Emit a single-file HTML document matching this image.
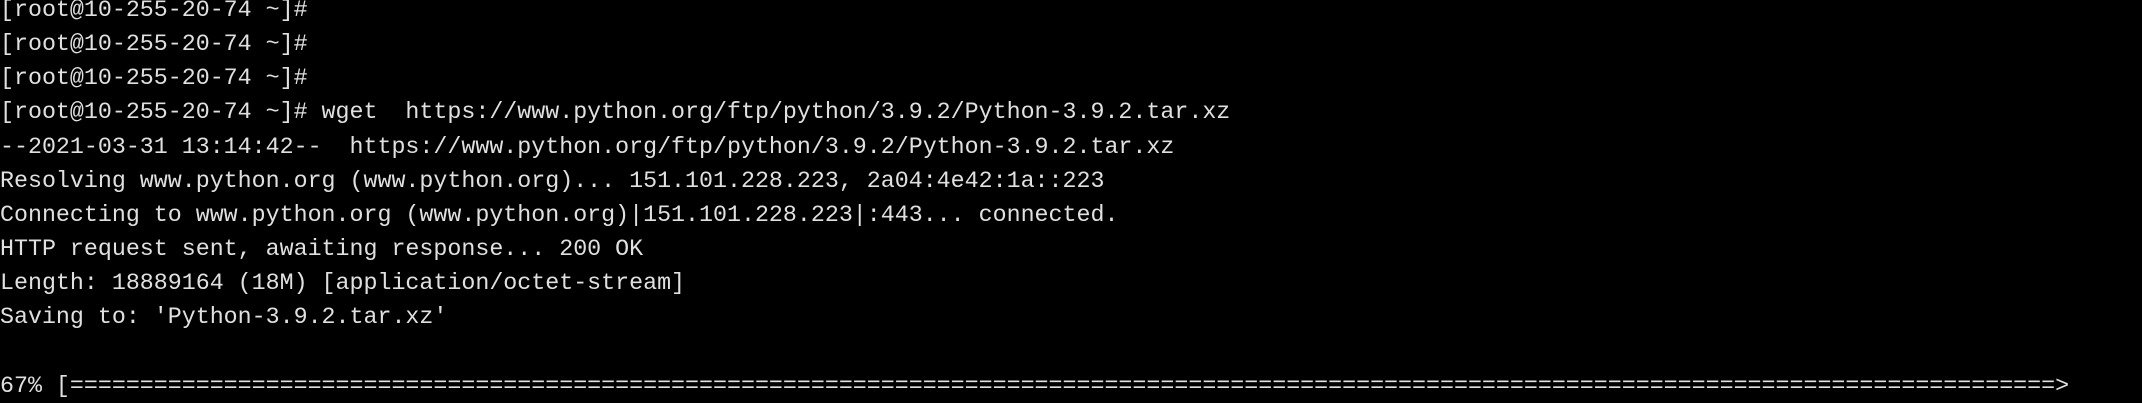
<!DOCTYPE html>
<html><head><meta charset="utf-8"><style>
html,body{margin:0;padding:0;background:#000;width:2142px;height:400px;overflow:hidden}
pre{margin:0;position:absolute;left:0;top:-7px;font-family:"Liberation Mono",monospace;font-size:23.3px;line-height:34.15px;color:#e0e0e0;white-space:pre}
</style></head><body>
<pre>[root@10-255-20-74 ~]#
[root@10-255-20-74 ~]#
[root@10-255-20-74 ~]#
[root@10-255-20-74 ~]# wget  https://www.python.org/ftp/python/3.9.2/Python-3.9.2.tar.xz
--2021-03-31 13:14:42--  https://www.python.org/ftp/python/3.9.2/Python-3.9.2.tar.xz
Resolving www.python.org (www.python.org)... 151.101.228.223, 2a04:4e42:1a::223
Connecting to www.python.org (www.python.org)|151.101.228.223|:443... connected.
HTTP request sent, awaiting response... 200 OK
Length: 18889164 (18M) [application/octet-stream]
Saving to: 'Python-3.9.2.tar.xz'

67% [==============================================================================================================================================&gt;</pre>
</body></html>
